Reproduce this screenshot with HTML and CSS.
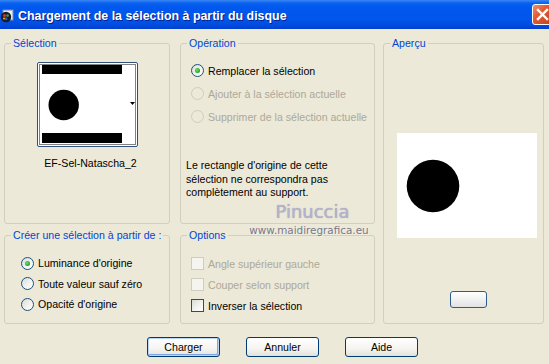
FILE: index.html
```html
<!DOCTYPE html>
<html lang="fr">
<head>
<meta charset="utf-8">
<title>Chargement de la sélection à partir du disque</title>
<link rel="stylesheet" href="styles.css">
</head>
<body>
<div class="window">
  <div class="titlebar">
    <svg class="app-icon" width="14" height="14" viewBox="0 0 14 14">
      <rect x="3" y="1" width="10" height="10" fill="#E8ECF4" stroke="#7A8CB0" stroke-width="1"/>
      <circle cx="6" cy="8" r="5.2" fill="#1A1A24"/>
      <circle cx="4.5" cy="6.5" r="1.6" fill="#D03030"/>
      <circle cx="7.6" cy="6.6" r="1.4" fill="#30A040"/>
      <circle cx="6" cy="9.8" r="1.5" fill="#3050D0"/>
      <circle cx="4" cy="9.6" r="1" fill="#E0C020"/>
    </svg>
    <span class="title">Chargement de la sélection à partir du disque</span>
    <div class="close">
      <svg width="13" height="13" viewBox="0 0 13 13"><path d="M2 2 L11 11 M11 2 L2 11" stroke="#fff" stroke-width="2.4" stroke-linecap="square"/></svg>
    </div>
  </div>

  <div class="client">
    <div class="groups">
      <section class="group g-sel">
        <span class="legend">Sélection</span>
        <div class="thumb-item">
          <svg class="thumb" width="101" height="85" viewBox="0 0 101 85">
            <rect x="0.5" y="0.5" width="100" height="84" rx="1.5" fill="#fff" stroke="#33507A"/>
            <rect x="2.5" y="2.5" width="96" height="80" fill="none" stroke="#000" stroke-dasharray="1 1"/>
            <rect x="5" y="3" width="80" height="9" fill="#000"/>
            <rect x="5" y="71" width="80" height="10" fill="#000"/>
            <circle cx="26.7" cy="43" r="15.2" fill="#000"/>
            <path d="M93 40 L98 40 L95.5 43 Z" fill="#000"/>
          </svg>
          <div class="thumb-label">EF-Sel-Natascha_2</div>
        </div>
      </section>

      <section class="group g-op">
        <span class="legend">Opération</span>
        <div class="choices op-choices">
          <div class="choice"><span class="radio checked"></span><span>Remplacer la sélection</span></div>
          <div class="choice disabled"><span class="radio"></span><span>Ajouter à la sélection actuelle</span></div>
          <div class="choice disabled"><span class="radio"></span><span>Supprimer de la sélection actuelle</span></div>
        </div>
        <p class="note">Le rectangle d'origine de cette sélection ne correspondra pas complètement au support.</p>
      </section>

      <section class="group g-prev">
        <span class="legend">Aperçu</span>
        <svg class="preview" width="140" height="105" viewBox="0 0 140 105">
          <rect width="140" height="105" fill="#fff"/>
          <circle cx="36" cy="53" r="26.3" fill="#000"/>
        </svg>
        <div class="mini-btn"></div>
      </section>

      <section class="group g-create">
        <span class="legend">Créer une sélection à partir de :</span>
        <div class="choices create-choices">
          <div class="choice"><span class="radio checked"></span><span>Luminance d'origine</span></div>
          <div class="choice"><span class="radio"></span><span>Toute valeur sauf zéro</span></div>
          <div class="choice"><span class="radio"></span><span>Opacité d'origine</span></div>
        </div>
      </section>

      <section class="group g-opt">
        <span class="legend">Options</span>
        <div class="choices opt-choices">
          <div class="choice disabled"><span class="check"></span><span>Angle supérieur gauche</span></div>
          <div class="choice disabled"><span class="check"></span><span>Couper selon support</span></div>
          <div class="choice"><span class="check"></span><span>Inverser la sélection</span></div>
        </div>
      </section>
    </div>

    <div class="buttons">
      <button class="btn default">Charger</button>
      <button class="btn">Annuler</button>
      <button class="btn">Aide</button>
    </div>
  </div>

  <div class="watermark">
    <div class="wm-name">Pinuccia</div>
    <div class="wm-url">www.maidiregrafica.eu</div>
  </div>
</div>
</body>
</html>
```

FILE: styles.css
```css
html, body {
  margin: 0;
  padding: 0;
  background: #ECE9D8;
}

.window {
  position: relative;
  width: 549px;
  height: 364px;
  overflow: hidden;
  background: #ECE9D8;
  font-family: "Liberation Sans", Arial, sans-serif;
  font-size: 10.6px;
  color: #000;
}

.titlebar {
  height: 29px;
  display: flex;
  align-items: center;
  background: linear-gradient(#3A86F4 0px, #0A62EE 3px, #0058EE 7px, #0055EA 20px, #0049DC 26px, #003FCB 29px);
  color: #fff;
  box-sizing: border-box;
  padding-top: 3px;
}

.app-icon {
  margin-left: 0;
  flex: none;
}

.title {
  margin-left: 4px;
  font-family: "Liberation Sans", Arial, sans-serif;
  font-weight: bold;
  font-size: 12.4px;
  text-shadow: 1px 1px 0 #0A1E8C;
  white-space: nowrap;
}

.close {
  margin-left: auto;
  margin-right: -4px;
  width: 21px;
  height: 21px;
  box-sizing: border-box;
  border: 1px solid #fff;
  border-radius: 3px;
  background: linear-gradient(135deg, #F0906C 0%, #E05A34 40%, #C8401E 100%);
  display: flex;
  align-items: center;
  justify-content: center;
  margin-top: -3px;
}

.client {
  padding: 14px 0 0 4px;
}

.groups {
  display: grid;
  grid-template-columns: 166px 10px 195px 8px 161px;
  grid-template-rows: 181px 89px;
  row-gap: 11px;
}

.group {
  position: relative;
  border: 1px solid #D0D0BF;
  border-radius: 3px;
  box-sizing: border-box;
}

.legend {
  position: absolute;
  top: -7px;
  left: 6px;
  padding: 0 2px;
  line-height: 13px;
  background: #ECE9D8;
  color: #0046D5;
  white-space: nowrap;
}

.g-sel { grid-column: 1; grid-row: 1; }
.g-op { grid-column: 3; grid-row: 1; }
.g-prev { grid-column: 5; grid-row: 1 / 3; }
.g-create { grid-column: 1; grid-row: 2; }
.g-opt { grid-column: 3; grid-row: 2; }

.thumb-item {
  display: flex;
  flex-direction: column;
  align-items: center;
  padding-top: 18px;
}

.thumb { display: block; }

.thumb-label {
  margin-top: 10px;
  margin-left: 7px;
  line-height: 13px;
}

.choices {
  display: flex;
  flex-direction: column;
}

.choice {
  display: flex;
  align-items: center;
  gap: 4px;
  white-space: nowrap;
}

.choice.disabled { color: #ACA899; }

.op-choices { padding: 15px 0 0 10px; }
.op-choices .choice { height: 23px; }

.create-choices { padding: 17px 0 0 16px; }
.create-choices .choice { height: 20.5px; }

.opt-choices { padding: 17px 0 0 10px; }
.opt-choices .choice { height: 21px; }

.radio {
  position: relative;
  width: 13px;
  height: 13px;
  box-sizing: border-box;
  border-radius: 50%;
  border: 1px solid #1C5180;
  background: linear-gradient(135deg, #DCDCD6 0%, #F2F2EE 55%, #FFFFFF 100%);
  flex: none;
}

.radio.checked::after {
  content: "";
  position: absolute;
  left: 3px;
  top: 3px;
  width: 5px;
  height: 5px;
  border-radius: 50%;
  background: radial-gradient(circle at 40% 40%, #6BE36B 0%, #21A121 70%, #1A8A1A 100%);
}

.disabled .radio {
  border-color: #CFCDC0;
  background: #ECE9D8;
}

.check {
  width: 13px;
  height: 13px;
  box-sizing: border-box;
  border: 1px solid #1C5180;
  background: linear-gradient(135deg, #DCDCD6 0%, #F2F2EE 55%, #FFFFFF 100%);
  flex: none;
}

.disabled .check {
  border-color: #CFCDC0;
  background: #F5F4EE;
}

.note {
  margin: 31px 0 0 5px;
  line-height: 13.5px;
  width: 180px;
}

.preview {
  display: block;
  margin: 89px 0 0 13px;
}

.mini-btn {
  margin: 53px 0 0 66px;
  width: 37px;
  height: 17px;
  box-sizing: border-box;
  border: 1px solid #2F5C8A;
  border-radius: 3px;
  background: linear-gradient(#FFFFFF, #EEEEEE 60%, #E2E2E2);
}

.buttons {
  display: flex;
  gap: 26px;
  margin-top: 13px;
  padding-left: 143px;
}

.btn {
  width: 73px;
  height: 20px;
  padding: 0;
  box-sizing: border-box;
  border: 1px solid #003C74;
  border-radius: 3px;
  background: linear-gradient(#FFFFFF 0%, #F5F4F0 60%, #E3E1D8 100%);
  font-family: "Liberation Sans", Arial, sans-serif;
  font-size: 10.6px;
  color: #000;
  line-height: 17px;
}

.btn.default {
  box-shadow: inset 0 0 0 1px #BAD3F6, inset -1px -1px 0 1px #7FA4E8;
}

.watermark {
  position: absolute;
  left: 249px;
  top: 202px;
  display: flex;
  flex-direction: column;
  align-items: center;
  width: 120px;
  pointer-events: none;
}

.wm-name {
  font-family: "DejaVu Sans", sans-serif;
  font-size: 18px;
  line-height: 20px;
  color: #B4B3CC;
  text-shadow: 0 0 1px #9896B2;
  margin-left: 7px;
}

.wm-url {
  font-family: "DejaVu Sans", sans-serif;
  font-size: 10.4px;
  line-height: 12px;
  margin-top: 2px;
  color: #77778A;
  text-shadow: 1px 1px 0 #F4F2E8;
}
```
